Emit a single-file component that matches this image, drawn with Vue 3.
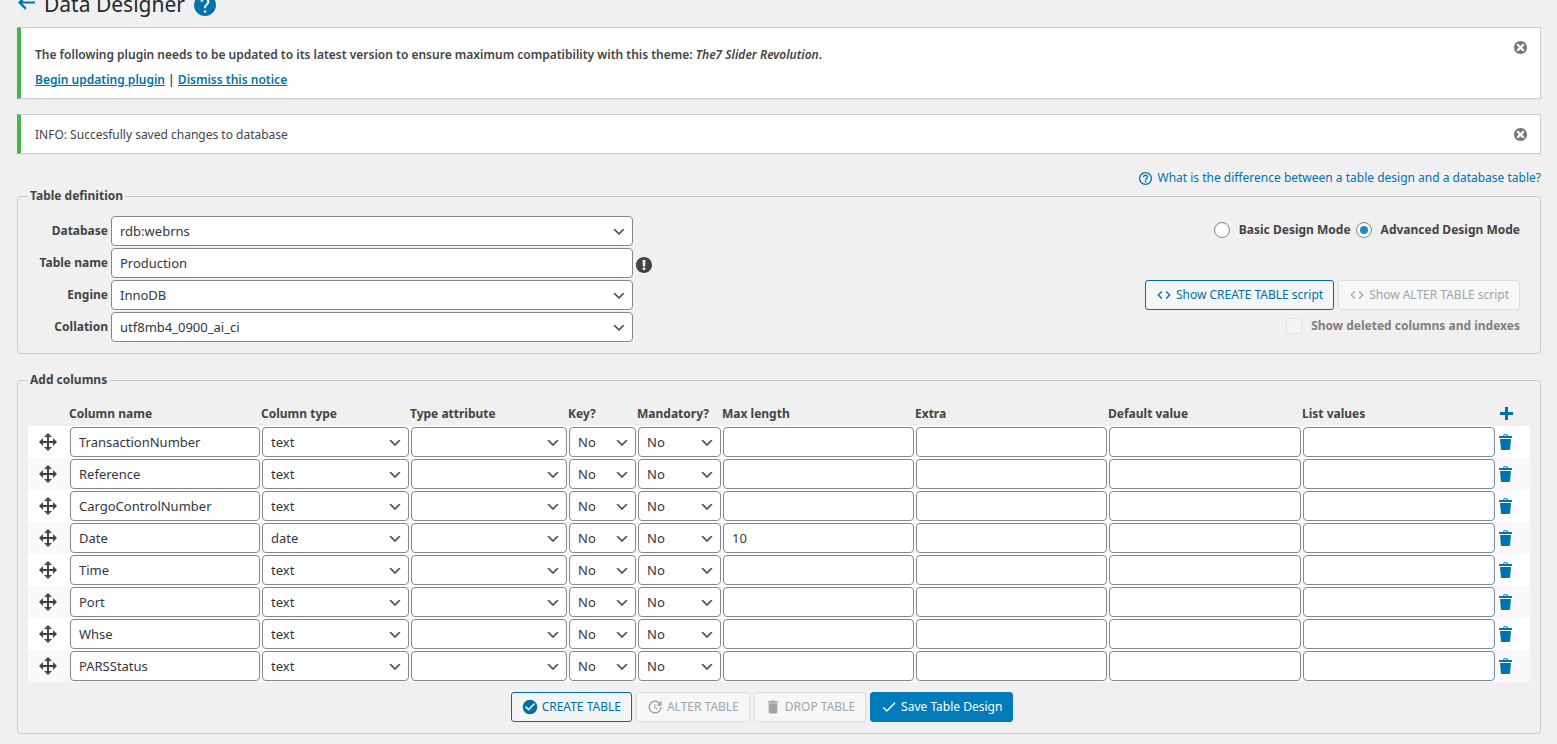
<script setup>
import { ref } from 'vue'

const icons = {
  back: { box: '2 3 16 14', d: 'M18 9v2H6l4 4-1 2-7-7 7-7 1 2-4 4h12z' },
  help: { box: '2 2 20 20', d: 'M12 2C6.48 2 2 6.48 2 12s4.48 10 10 10 10-4.48 10-10S17.52 2 12 2zm1 17h-2v-2h2v2zm2.07-7.75l-.9.92C13.45 12.9 13 13.5 13 15h-2v-.5c0-1.1.45-2.1 1.17-2.83l1.24-1.26c.37-.36.59-.86.59-1.41 0-1.1-.9-2-2-2s-2 .9-2 2H8c0-2.21 1.79-4 4-4s4 1.79 4 4c0 .88-.36 1.68-.93 2.25z' },
  helpOutline: { box: '2 2 20 20', d: 'M11 18h2v-2h-2v2zm1-16C6.48 2 2 6.48 2 12s4.48 10 10 10 10-4.48 10-10S17.52 2 12 2zm0 18c-4.41 0-8-3.59-8-8s3.59-8 8-8 8 3.59 8 8-3.59 8-8 8zm0-14c-2.21 0-4 1.79-4 4h2c0-1.1.9-2 2-2s2 .9 2 2c0 2-3 1.75-3 5h2c0-2.25 3-2.5 3-5 0-2.21-1.79-4-4-4z' },
  dismiss: { box: '2 2 16 16', d: 'M10 2c4.42 0 8 3.58 8 8s-3.58 8-8 8-8-3.58-8-8 3.58-8 8-8zm5 11l-3-3 3-3-2-2-3 3-3-3-2 2 3 3-3 3 2 2 3-3 3 3z' },
  warning: { box: '2 2 16 16', d: 'M10 2c4.42 0 8 3.58 8 8s-3.58 8-8 8-8-3.58-8-8 3.58-8 8-8zm1.13 9.38l.35-6.46H8.52l.35 6.46h2.26zm-.09 3.36c.24-.23.37-.55.37-.96 0-.42-.12-.74-.36-.97s-.59-.35-1.06-.35-.82.12-1.07.35-.37.55-.37.97c0 .41.13.73.38.96.26.23.61.34 1.06.34s.8-.11 1.05-.34z' },
  code: { box: '0 0 24 24', d: 'M9.4 16.6L4.8 12l4.6-4.6L8 6l-6 6 6 6 1.4-1.4zm5.2 0l4.6-4.6-4.6-4.6L16 6l6 6-6 6-1.4-1.4z' },
  plus: { box: '0 0 13 13', d: 'M5 0h3v5h5v3H8v5H5V8H0V5h5z' },
  move: { box: '1 1 18 18', d: 'M19 10l-4 4v-3h-4v4h3l-4 4-4-4h3v-4H5v3l-4-4 4-4v3h4V5H6l4-4 4 4h-3v4h4V6z' },
  trash: { box: '3 2 13 16', d: 'M12 4h3c.6 0 1 .4 1 1v1H3V5c0-.6.5-1 1-1h3c.2-1.100 1.300-2 2.500-2s2.300.9 2.500 2zM8 4h3c-.2-.6-.9-1-1.500-1S8.200 3.400 8 4zM4 7h11l-.9 10.100c0 .5-.5.9-1 .9H5.900c-.5 0-.9-.4-1-.9L4 7z' },
  checkCircle: { box: '1 1 22 22', d: 'M12 2C6.480 2 2 6.480 2 12s4.480 10 10 10 10-4.480 10-10S17.520 2 12 2zm-2 15l-5-5 1.410-1.410L10 14.170l7.590-7.590L19 8l-9 9z' },
  update: { box: '1 1 22 22', d: 'M21 10.120h-6.780l2.740-2.820c-2.730-2.700-7.150-2.800-9.880-.1-2.730 2.710-2.730 7.080 0 9.790s7.150 2.710 9.880 0C18.320 15.650 19 14.080 19 12.100h2c0 1.980-.88 4.550-2.640 6.290-3.510 3.480-9.210 3.480-12.720 0-3.500-3.470-3.530-9.110-.02-12.580s9.140-3.470 12.650 0L21 3v7.120zM12.500 8v4.250l3.500 2.080-.72 1.210L11 13V8h1.500z' },
  bin: { box: '1 1 22 22', d: 'M6 19c0 1.100.9 2 2 2h8c1.100 0 2-.9 2-2V7H6v12zM19 4h-3.500l-1-1h-5l-1 1H5v2h14V4z' },
  done: { box: '1 1 22 22', d: 'M9 16.200L4.800 12l-1.400 1.400L9 19 21 7l-1.400-1.400L9 16.200z' },
}

const mode = ref('advanced')
const definition = ref([
  { id: 'database', label: 'Database', value: 'rdb:webrns', select: true },
  { id: 'table-name', label: 'Table name', value: 'Production', select: false },
  { id: 'engine', label: 'Engine', value: 'InnoDB', select: true },
  { id: 'collation', label: 'Collation', value: 'utf8mb4_0900_ai_ci', select: true },
])

const headings = [
  { key: 'name', label: 'Column name' },
  { key: 'type', label: 'Column type', options: ['text', 'date'] },
  { key: 'attribute', label: 'Type attribute', options: [''] },
  { key: 'key', label: 'Key?', options: ['No', 'Yes'] },
  { key: 'mandatory', label: 'Mandatory?', options: ['No', 'Yes'] },
  { key: 'length', label: 'Max length' },
  { key: 'extra', label: 'Extra' },
  { key: 'default', label: 'Default value' },
  { key: 'list', label: 'List values' },
]

function makeRow(name, type = 'text', length = '') {
  return { name, type, attribute: '', key: 'No', mandatory: 'No', length, extra: '', default: '', list: '' }
}

const rows = ref([
  makeRow('TransactionNumber'),
  makeRow('Reference'),
  makeRow('CargoControlNumber'),
  makeRow('Date', 'date', '10'),
  makeRow('Time'),
  makeRow('Port'),
  makeRow('Whse'),
  makeRow('PARSStatus'),
])
</script>

<template>
  <main class="page">
    <header class="title-bar">
      <a href="#" class="back" aria-label="Back">
        <svg :viewBox="icons.back.box"><path :d="icons.back.d" /></svg>
      </a>
      <h1>Data Designer</h1>
      <a href="#" class="title-help" aria-label="Help">
        <svg :viewBox="icons.help.box"><path :d="icons.help.d" /></svg>
      </a>
    </header>

    <section class="notice plugin">
      <div>
        <p>The following plugin needs to be updated to its latest version to ensure maximum compatibility with this theme: <em>The7 Slider Revolution</em>.</p>
        <p><a href="#">Begin updating plugin</a> | <a href="#">Dismiss this notice</a></p>
      </div>
      <button type="button" class="dismiss" aria-label="Dismiss this notice">
        <svg :viewBox="icons.dismiss.box"><path :d="icons.dismiss.d" /></svg>
      </button>
    </section>

    <section class="notice">
      <p>INFO: Succesfully saved changes to database</p>
      <button type="button" class="dismiss" aria-label="Dismiss this notice">
        <svg :viewBox="icons.dismiss.box"><path :d="icons.dismiss.d" /></svg>
      </button>
    </section>

    <div class="help-line">
      <a href="#">
        <svg :viewBox="icons.helpOutline.box"><path :d="icons.helpOutline.d" /></svg>
        What is the difference between a table design and a database table?
      </a>
    </div>

    <fieldset class="panel">
      <legend>Table definition</legend>
      <div class="definition">
        <div class="form">
          <template v-for="field in definition" :key="field.id">
            <label :for="field.id">{{ field.label }}</label>
            <select v-if="field.select" :id="field.id" v-model="field.value">
              <option>{{ field.value }}</option>
            </select>
            <input v-else :id="field.id" v-model="field.value" type="text">
            <span class="mark">
              <svg v-if="!field.select" :viewBox="icons.warning.box"><path :d="icons.warning.d" /></svg>
            </span>
          </template>
        </div>
        <div class="options">
          <div class="modes">
            <label><input v-model="mode" type="radio" name="mode" value="basic">Basic Design Mode</label>
            <label><input v-model="mode" type="radio" name="mode" value="advanced">Advanced Design Mode</label>
          </div>
          <div class="buttons">
            <button type="button" class="button">
              <svg :viewBox="icons.code.box"><path :d="icons.code.d" /></svg>Show CREATE TABLE script
            </button>
            <button type="button" class="button" disabled>
              <svg :viewBox="icons.code.box"><path :d="icons.code.d" /></svg>Show ALTER TABLE script
            </button>
          </div>
          <label class="deleted"><input type="checkbox" disabled>Show deleted columns and indexes</label>
        </div>
      </div>
    </fieldset>

    <fieldset class="panel columns">
      <legend>Add columns</legend>
      <table>
        <colgroup>
          <col class="w-move">
          <col v-for="h in headings" :key="h.key" :class="'w-' + h.key">
          <col class="w-tools">
        </colgroup>
        <thead>
          <tr>
            <td></td>
            <th v-for="h in headings" :key="h.key" scope="col">{{ h.label }}</th>
            <td class="tools">
              <button type="button" class="icon-button add" aria-label="Add column" @click="rows.push(makeRow(''))">
                <svg :viewBox="icons.plus.box"><path :d="icons.plus.d" /></svg>
              </button>
            </td>
          </tr>
        </thead>
        <tbody>
          <tr v-for="(row, i) in rows" :key="i">
            <td class="move">
              <svg :viewBox="icons.move.box"><path :d="icons.move.d" /></svg>
            </td>
            <td v-for="h in headings" :key="h.key">
              <select v-if="h.options" v-model="row[h.key]" :aria-label="h.label">
                <option v-for="o in h.options" :key="o">{{ o }}</option>
              </select>
              <input v-else v-model="row[h.key]" type="text" :aria-label="h.label">
            </td>
            <td class="tools">
              <button type="button" class="icon-button trash" aria-label="Delete column" @click="rows.splice(i, 1)">
                <svg :viewBox="icons.trash.box"><path :d="icons.trash.d" /></svg>
              </button>
            </td>
          </tr>
        </tbody>
      </table>
      <div class="buttons actions">
        <button type="button" class="button">
          <svg :viewBox="icons.checkCircle.box"><path :d="icons.checkCircle.d" /></svg>CREATE TABLE
        </button>
        <button type="button" class="button" disabled>
          <svg :viewBox="icons.update.box"><path :d="icons.update.d" /></svg>ALTER TABLE
        </button>
        <button type="button" class="button" disabled>
          <svg :viewBox="icons.bin.box"><path :d="icons.bin.d" /></svg>DROP TABLE
        </button>
        <button type="button" class="button primary">
          <svg :viewBox="icons.done.box"><path :d="icons.done.d" /></svg>Save Table Design
        </button>
      </div>
    </fieldset>
  </main>
</template>

<style>
html {
  background: #f0f0f0;
}
body {
  overflow: hidden;
}
</style>

<style scoped>
* {
  box-sizing: border-box;
}
.page {
  padding: 0 16px 0 17px;
  color: #444;
  font: 12px/18px "Noto Sans", "Open Sans", sans-serif;
}
svg {
  display: block;
  fill: currentColor;
}
a {
  color: #0073aa;
}
p {
  margin: 0;
}

.title-bar {
  display: flex;
  align-items: center;
  gap: 9px;
  height: 30px;
  margin-top: -10px;
  margin-bottom: 7px;
}
.title-bar h1 {
  margin: 0;
  padding-bottom: 2px;
  color: #23282d;
  font-size: 21px;
  font-weight: 400;
  line-height: 28px;
}
.back {
  padding-left: 1px;
  padding-bottom: 6px;
}
.back svg {
  width: 17px;
  height: 15px;
}
.title-help svg {
  width: 22px;
  height: 22px;
}

.notice {
  display: flex;
  justify-content: space-between;
  align-items: flex-start;
  margin-bottom: 15px;
  padding: 10px 13px 8px 14px;
  border: 1px solid #ccd0d4;
  border-left: 4px solid #46b450;
  background: #fff;
  box-shadow: 0 1px 1px rgba(0, 0, 0, 0.04);
  line-height: 20px;
}
.notice.plugin {
  font-weight: 600;
}
.plugin div {
  padding-top: 2px;
}
.plugin p {
  padding-top: 5px;
}
.dismiss {
  display: block;
  padding: 3px 0 2px;
  border: 0;
  background: none;
  color: #72777c;
}
.dismiss svg {
  width: 13px;
  height: 13px;
}

.help-line {
  display: flex;
  justify-content: flex-end;
  height: 18px;
}
.help-line a {
  display: flex;
  align-items: center;
  gap: 5px;
  text-decoration: none;
}
.help-line svg {
  width: 13px;
  height: 13px;
}

.panel {
  min-width: 0;
  margin: 0 0 17px;
  padding: 11px 10px;
  border: 1px solid #ccc;
  border-radius: 4px;
}
legend {
  padding: 0 2px;
  font-weight: 700;
}
.definition {
  display: flex;
  justify-content: space-between;
  gap: 24px;
}
.form {
  flex: 0 1 628px;
  display: grid;
  grid-template-columns: 80px 1fr 20px;
  column-gap: 3px;
  row-gap: 2px;
  align-items: center;
}
.form label {
  font-weight: 700;
  text-align: right;
  white-space: nowrap;
}
.mark svg {
  width: 16px;
  height: 16px;
  margin-top: 4px;
}

input[type="text"],
select {
  display: block;
  width: 100%;
  height: 30px;
  margin: 0;
  padding: 0 8px;
  border: 1px solid #7e8993;
  border-radius: 4px;
  background: #fff;
  color: #32373c;
  font: 13px/28px "Noto Sans", "Open Sans", sans-serif;
}
select {
  padding-right: 24px;
  appearance: none;
  background: #fff url("data:image/svg+xml;utf8,%3Csvg width='20' height='20' xmlns='http://www.w3.org/2000/svg'%3E%3Cpath d='M5 6l5 5 5-5 2 1-7 7-7-7 2-1z' fill='%23555'/%3E%3C/svg%3E") no-repeat right 5px top 55%;
  background-size: 16px 16px;
}

.options {
  display: flex;
  flex-direction: column;
  align-items: flex-end;
  padding: 5px 10px 0 0;
  font-weight: 700;
}
.modes {
  display: flex;
  gap: 5px;
  margin-bottom: 41px;
}
.options label {
  display: flex;
  align-items: center;
  gap: 9px;
}
.options .deleted {
  margin-top: 7px;
  color: #7f7f7f;
}
input[type="radio"],
input[type="checkbox"] {
  display: grid;
  place-content: center;
  width: 16px;
  height: 16px;
  margin: 0;
  appearance: none;
  border: 1px solid #7e8993;
  border-radius: 4px;
  background: #fff;
  box-shadow: inset 0 1px 2px rgba(0, 0, 0, 0.1);
}
input[type="radio"] {
  border-radius: 50%;
}
input[type="radio"]:checked::before {
  content: "";
  width: 8px;
  height: 8px;
  border-radius: 50%;
  background: #1e8cbe;
}
input[type="checkbox"]:disabled {
  border-color: #e0e0e0;
  background: #f5f5f5;
  box-shadow: none;
}

.buttons {
  display: flex;
  gap: 4px;
}
.button {
  display: flex;
  align-items: center;
  gap: 4px;
  height: 30px;
  padding: 0 10px;
  border: 1px solid #0071a1;
  border-radius: 3px;
  background: #f3f5f6;
  color: #0071a1;
  font: 12px/28px "Noto Sans", "Open Sans", sans-serif;
  white-space: nowrap;
}
.button svg {
  width: 16px;
  height: 16px;
}
.button:disabled {
  border-color: #ddd;
  background: #f7f7f7;
  color: #a0a5aa;
}
.button.primary {
  border-color: #007cba;
  background: #007cba;
  color: #fff;
}
.actions {
  justify-content: center;
  margin-top: 10px;
  padding-right: 34px;
}

.columns {
  margin-bottom: 0;
}
table {
  width: 100%;
  table-layout: fixed;
  border-collapse: collapse;
}
.w-move { width: 41px; }
.w-name { width: 192px; }
.w-type { width: 149px; }
.w-attribute { width: 158px; }
.w-key { width: 69px; }
.w-mandatory { width: 85px; }
.w-length { width: 193px; }
.w-extra { width: 193px; }
.w-tools { width: 34px; }
td {
  padding: 1px;
}
th {
  height: 26px;
  padding: 2px 0 0;
  font-weight: 700;
  text-align: left;
  white-space: nowrap;
}
tbody tr {
  background: #f9f9f9;
}
tbody tr:nth-child(odd) {
  background: #fff;
}
.move {
  padding-left: 11px;
}
.move svg {
  width: 18px;
  height: 18px;
}
.tools {
  padding-left: 3px;
}
.icon-button {
  display: block;
  padding: 0;
  border: 0;
  background: none;
  color: #0073aa;
}
.add svg {
  width: 13px;
  height: 13px;
  margin-left: 1px;
}
.trash svg {
  width: 13px;
  height: 16px;
}
</style>
